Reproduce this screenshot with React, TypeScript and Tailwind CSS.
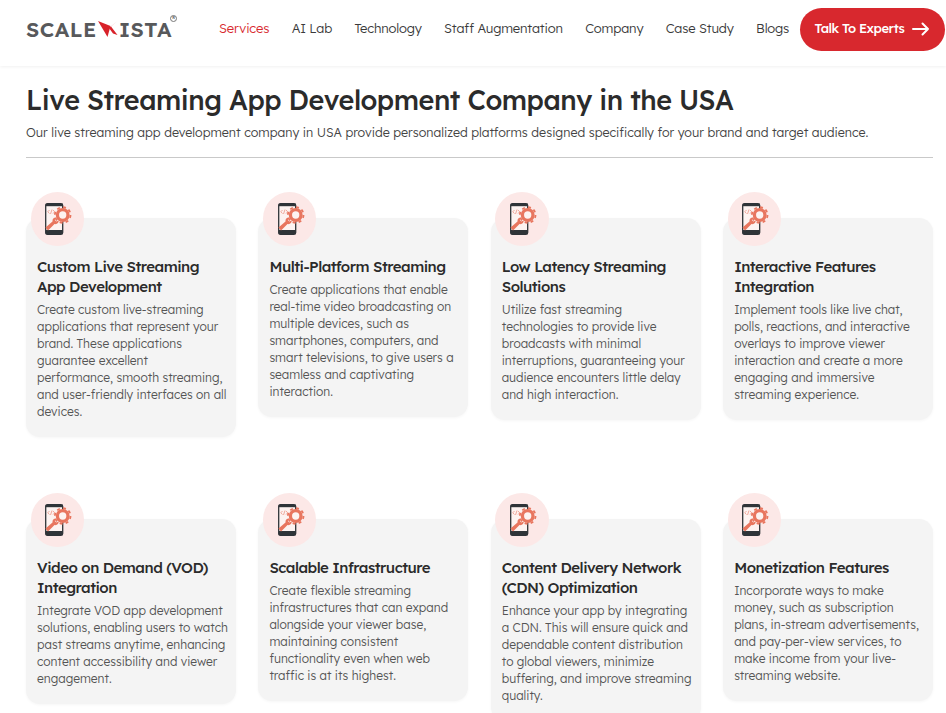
const font = { fontFamily: 'Lexend, Inter, sans-serif' };

const navItems = ['Services', 'AI Lab', 'Technology', 'Staff Augmentation', 'Company', 'Case Study', 'Blogs'];

const features = [
  {
    title: 'Custom Live Streaming App Development',
    body: 'Create custom live-streaming applications that represent your brand. These applications guarantee excellent\nperformance, smooth streaming, and user-friendly interfaces on all devices.',
  },
  {
    title: 'Multi-Platform Streaming',
    body: 'Create applications that enable real-time video broadcasting on multiple devices, such as smartphones, computers, and smart televisions, to give users a seamless and captivating interaction.',
  },
  {
    title: 'Low Latency Streaming Solutions',
    body: 'Utilize fast streaming technologies to provide live broadcasts with minimal interruptions, guaranteeing your audience encounters little delay and high interaction.',
  },
  {
    title: 'Interactive Features Integration',
    body: 'Implement tools like live chat, polls, reactions, and interactive overlays to improve viewer interaction and create a more engaging and immersive streaming experience.',
  },
  {
    title: 'Video on Demand (VOD) Integration',
    body: 'Integrate VOD app development solutions, enabling users to watch past streams anytime, enhancing content accessibility and viewer engagement.',
  },
  {
    title: 'Scalable Infrastructure',
    body: 'Create flexible streaming infrastructures that can expand alongside your viewer base, maintaining consistent functionality even when web traffic is at its highest.',
  },
  {
    title: 'Content Delivery Network (CDN) Optimization',
    body: 'Enhance your app by integrating a CDN. This will ensure quick and dependable content distribution to global viewers, minimize buffering, and improve streaming quality.',
  },
  {
    title: 'Monetization Features',
    body: 'Incorporate ways to make money, such as subscription plans, in-stream advertisements, and pay-per-view services, to make income from your live-streaming website.',
  },
];

function FeatureIcon() {
  return (
    <svg width="27" height="32" viewBox="0 0 27 32" fill="none" className="ml-[3px]">
      <rect x="0.7" y="0.7" width="17" height="30.600" rx="1.800" fill="#fdf3f1" stroke="#2f3438" strokeWidth="1.300" />
      <rect x="0.7" y="0.7" width="17" height="2.500" fill="#2f3438" />
      <rect x="0.7" y="27" width="17" height="4.300" fill="#2f3438" />
      <path d="M4.500 7L2.800 8.800 4.500 10.600M8 7l1.700 1.800L8 10.600M7 6.500l-1.500 4.500" stroke="#ea8a78" strokeWidth="0.700" />
      <path d="M0.500 24.500l7-6c-.3-2.400 1.300-4 3.600-3.900l-1.300 2.300 1.500 1.600 2.400-1c.2 2.400-1.900 4.200-4.200 3.500L3 27.500z" fill="#e8765f" />
      <circle cx="17.700" cy="12" r="5.300" fill="#fdf3f1" stroke="#e8765f" strokeWidth="3.300" />
      <circle cx="17.700" cy="12" r="7.800" stroke="#e8765f" strokeWidth="1.800" strokeDasharray="3 3.130" />
    </svg>
  );
}

function Logo() {
  return (
    <div className="relative flex items-center text-[21px] font-semibold leading-none tracking-[0.5px] text-[#58595b]">
      <span>SCALE</span>
      <svg width="20" height="16" viewBox="0 0 20 16" className="ml-[1px] mr-[1px]">
        <path d="M0 0L12.500 5 9.500 16z" fill="#d8222a" />
        <path d="M19.500 0L13 5.500 19.500 14 15 12.500 11 7z" fill="#d8222a" />
      </svg>
      <span>ISTA</span>
      <span className="absolute -right-[5px] -top-[4px] flex h-[7px] w-[7px] items-center justify-center rounded-full border border-[#777] text-[4px] tracking-normal">
        R
      </span>
    </div>
  );
}

function FeatureCard({ title, body }: { title: string; body: string }) {
  return (
    <div className="relative rounded-[14px] bg-[#f4f4f4] pb-[17px] pl-[11px] pr-[8px] pt-[39px] shadow-[0_1px_3px_rgba(0,0,0,0.04)]">
      <div className="absolute -top-[26px] left-[4.500px] flex h-[53.500px] w-[53.500px] items-center justify-center rounded-full bg-[#fce8e7]">
        <FeatureIcon />
      </div>
      <h3 className="text-[15px] font-medium leading-[20px] tracking-[-0.5px] text-[#2b2b2b]">{title}</h3>
      <p className="mt-[4px] whitespace-pre-line text-[12px] font-light leading-[17px] text-[#555]">{body}</p>
    </div>
  );
}

export default function App() {
  return (
    <div className="h-[713px] overflow-hidden bg-white" style={font}>
      <header className="flex h-[66px] items-center justify-between pb-[8px] pl-[26px] pr-[1px] shadow-[0_1px_3px_rgba(0,0,0,0.06)]">
        <Logo />
        <div className="flex items-center gap-[11px]">
          <nav className="flex items-center gap-[22.350px] text-[13px] font-light tracking-[-0.15px] text-[#3a3a3a]">
            {navItems.map((item) => (
              <a key={item} className={item === 'Services' ? 'text-[#d8282e]' : ''}>
                {item}
              </a>
            ))}
          </nav>
          <button className="flex h-[43px] w-[145px] items-center justify-center gap-[8px] rounded-full bg-[#d8282e] text-[13px] font-medium tracking-[-0.5px] text-white">
            Talk To Experts
            <svg width="18" height="14" viewBox="0 0 18 14" fill="none" stroke="#fff" strokeWidth="2" strokeLinecap="round" strokeLinejoin="round">
              <path d="M1 7h15M10.500 1.500L16 7l-5.500 5.500" />
            </svg>
          </button>
        </div>
      </header>

      <main className="pl-[26px] pr-[13px] pt-[17px]">
        <h1 className="text-[27px] font-medium leading-[34px] tracking-[-0.46px] text-[#2b2b2b]">
          Live Streaming App Development Company in the USA
        </h1>
        <p className="mt-[6px] text-[12.500px] font-light leading-[18px] text-[#444]">
          Our live streaming app development company in USA provide personalized platforms designed specifically for your brand and target audience.
        </p>
        <hr className="mt-[16px] border-[#c9c9c9]" />
        <div className="mt-[60px] grid grid-cols-4 items-start gap-x-[22.500px] gap-y-[82px]">
          {features.map((f) => (
            <FeatureCard key={f.title} title={f.title} body={f.body} />
          ))}
        </div>
      </main>
    </div>
  );
}
